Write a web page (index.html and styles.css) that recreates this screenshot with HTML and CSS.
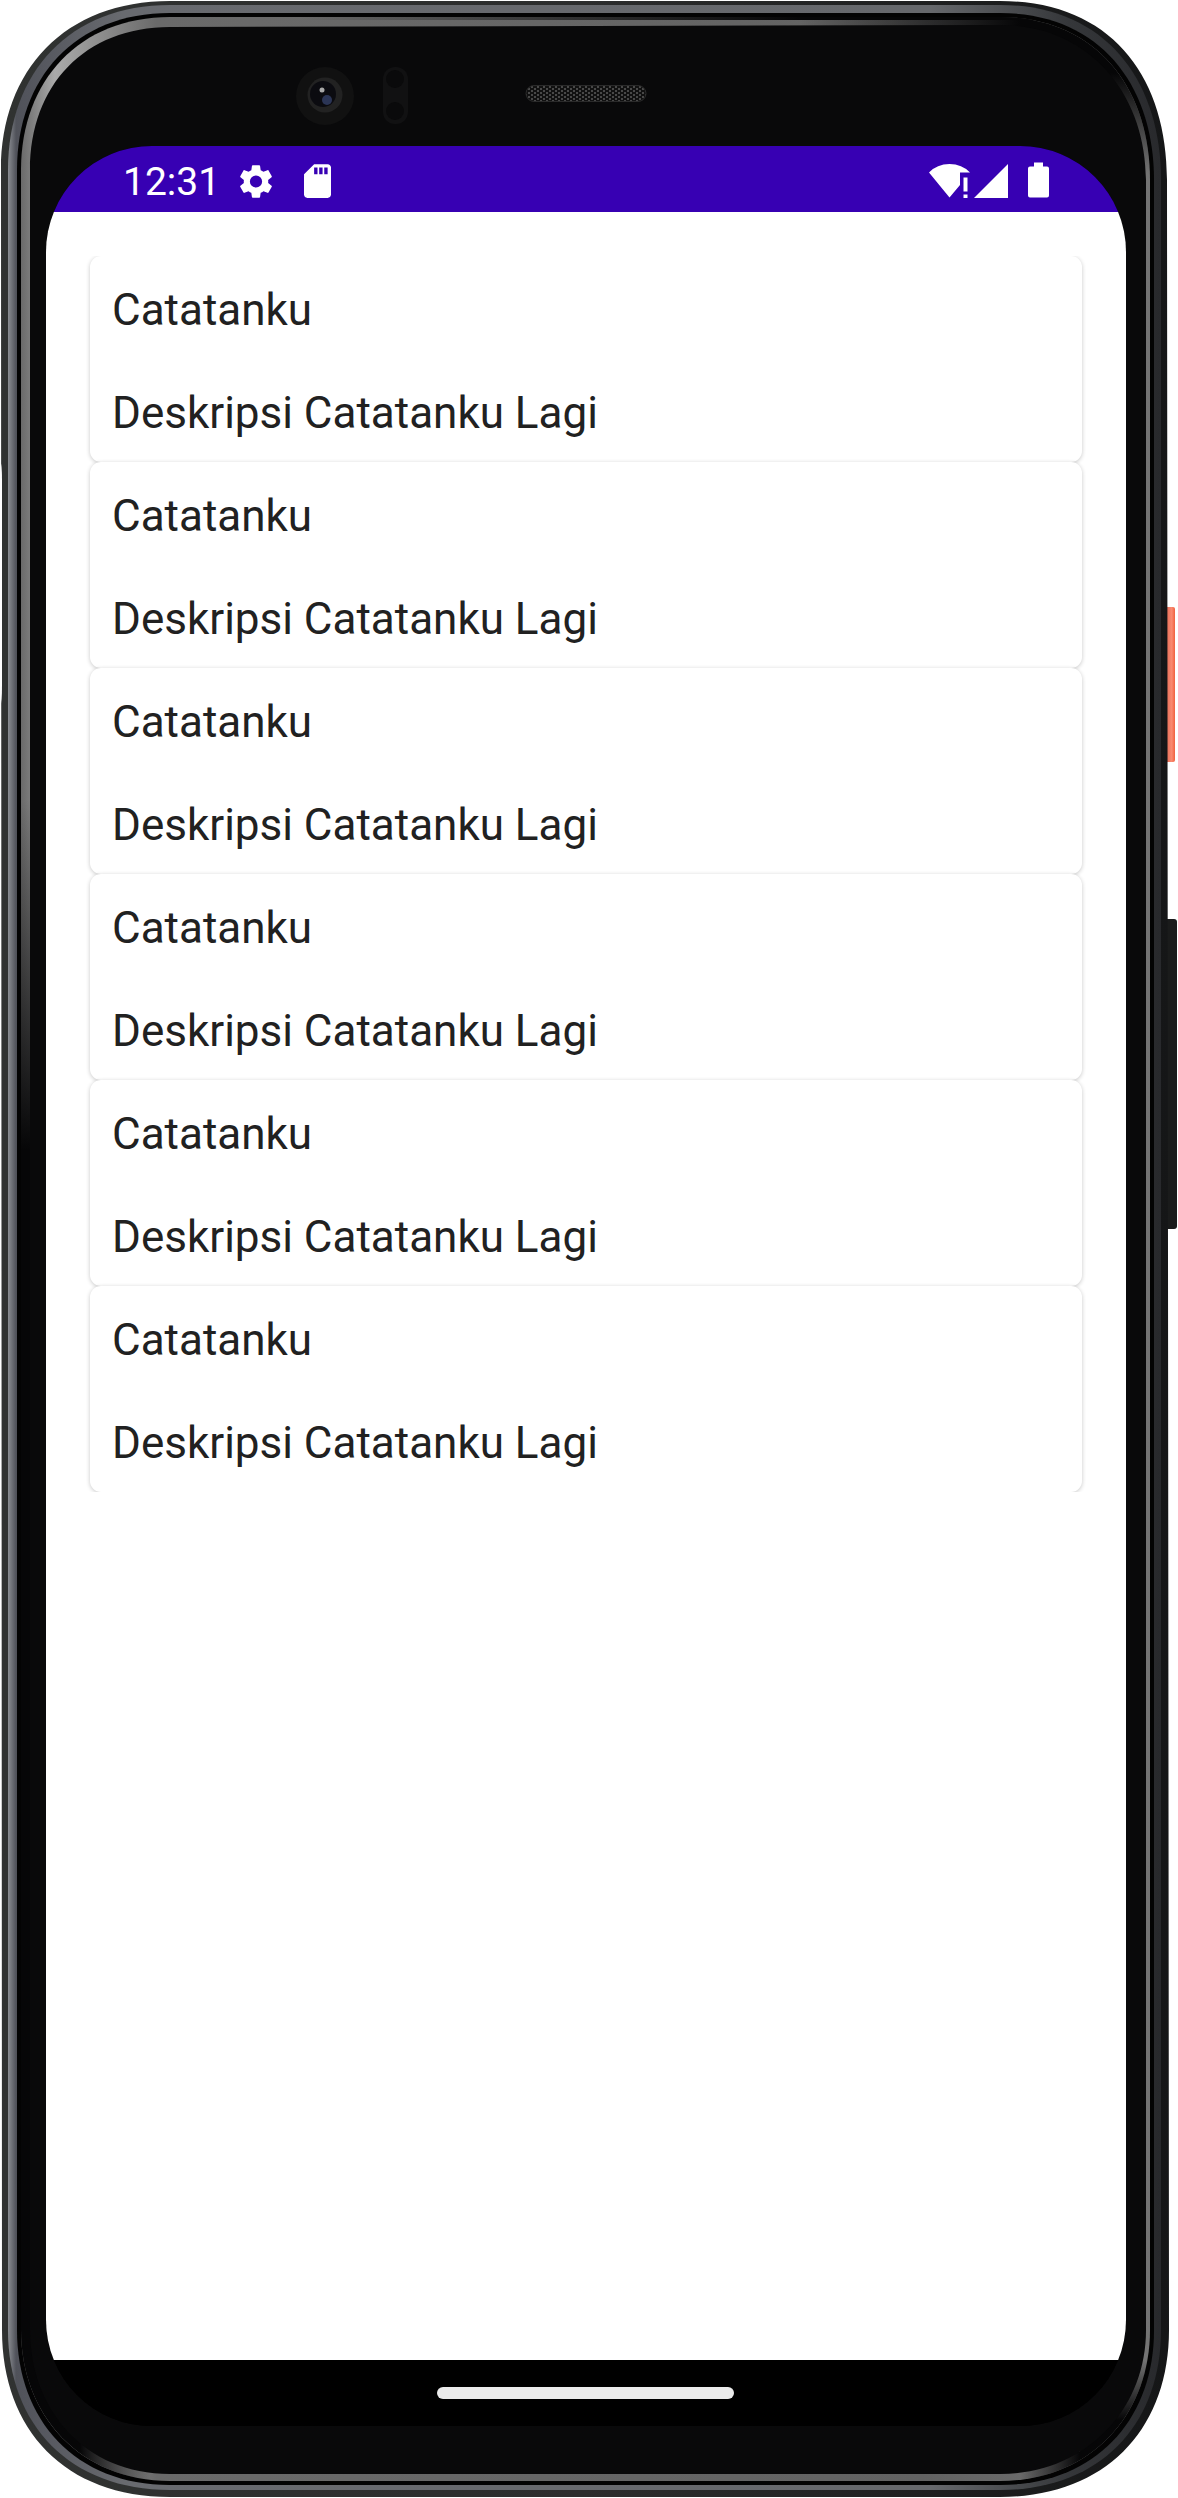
FILE: index.html
```html
<!DOCTYPE html>
<html lang="id">
<head>
<meta charset="utf-8">
<title>Catatanku</title>
<link rel="stylesheet" href="styles.css">
</head>
<body>
<div class="device">
  <svg class="shell" width="1178" height="2498" viewBox="0 0 1178 2498" aria-hidden="true">
    <defs>
      <linearGradient id="coral" x1="0" x2="1" y1="0" y2="0">
        <stop offset="0" stop-color="#7d2c20"/><stop offset=".25" stop-color="#e8705a"/><stop offset=".7" stop-color="#fa8a70"/><stop offset="1" stop-color="#f0623f"/>
      </linearGradient>
      <linearGradient id="edge" x1="0" x2="1" y1="0" y2="0">
        <stop offset="0" stop-color="#303231"/><stop offset=".5" stop-color="#2c2d2d"/><stop offset="1" stop-color="#151617"/>
      </linearGradient>
      <linearGradient id="metal" gradientUnits="userSpaceOnUse" x1="8" x2="1161" y1="0" y2="0">
        <stop offset="0" stop-color="#8a8d92"/><stop offset=".007" stop-color="#50525a"/><stop offset=".1" stop-color="#686a6f"/><stop offset=".8" stop-color="#66686c"/><stop offset=".92" stop-color="#35373a"/><stop offset="1" stop-color="#28292c"/>
      </linearGradient>
      <linearGradient id="rim" gradientUnits="userSpaceOnUse" x1="21" x2="1150" y1="0" y2="0">
        <stop offset="0" stop-color="#6a6a6a"/><stop offset=".03" stop-color="#aaa"/><stop offset=".12" stop-color="#6a6a6a"/><stop offset=".8" stop-color="#626262"/><stop offset="1" stop-color="#747474"/>
      </linearGradient>
      <linearGradient id="fade-down" x1="0" x2="0" y1="0" y2="1">
        <stop offset="0" stop-color="#060607" stop-opacity="0"/><stop offset="1" stop-color="#060607"/>
      </linearGradient>
      <linearGradient id="fade-up" x1="0" x2="0" y1="1" y2="0">
        <stop offset="0" stop-color="#060607" stop-opacity="0"/><stop offset="1" stop-color="#060607"/>
      </linearGradient>
      <linearGradient id="fade-right" x1="0" x2="1" y1="0" y2="0">
        <stop offset="0" stop-color="#060607" stop-opacity="0"/><stop offset="1" stop-color="#060607"/>
      </linearGradient>
      <linearGradient id="fade-left" x1="1" x2="0" y1="0" y2="0">
        <stop offset="0" stop-color="#060607" stop-opacity="0"/><stop offset="1" stop-color="#060607"/>
      </linearGradient>
      <pattern id="mesh" width="6" height="4" patternUnits="userSpaceOnUse">
        <rect width="6" height="4" fill="#111"/><rect width="2" height="2" fill="#484848"/><rect x="3" y="2" width="2" height="2" fill="#484848"/>
      </pattern>
      <clipPath id="rim-clip"><path d="M170 17H1000C1095 17 1150 87 1150 180V2330C1150 2415 1090 2481 1000 2481H170C80 2481 21 2415 21 2330V170C21 80 80 17 170 17Z"/></clipPath>
    </defs>
    <rect x="1164" y="607" width="11" height="155" rx="2" fill="url(#coral)"/>
    <rect x="1164" y="919" width="13" height="310" rx="3" fill="#1a1b1b"/>
    <path fill="url(#edge)" d="M170 1H1000C1110 1 1167 75 1167 180L1169 2330C1169 2430 1105 2497 1000 2497H170C65 2497 2 2430 2 2330L1 170C1 70 65 1 170 1Z"/>
    <path fill="#fff" d="M0 460Q2 464 2 480V685Q2 702 0 708Z"/>
    <path fill="url(#metal)" d="M170 5H1000C1105 5 1161 80 1161 180V2330C1161 2425 1100 2490 1000 2490H170C70 2490 8 2425 8 2330V170C8 72 70 5 170 5Z"/>
    <path fill="#030303" d="M170 13H1000C1100 13 1154 85 1154 180V2330C1154 2420 1095 2485 1000 2485H170C75 2485 17 2420 17 2330V170C17 78 75 13 170 13Z"/>
    <path fill="url(#rim)" d="M170 17H1000C1095 17 1150 87 1150 180V2330C1150 2415 1090 2481 1000 2481H170C80 2481 21 2415 21 2330V170C21 80 80 17 170 17Z"/>
    <g clip-path="url(#rim-clip)">
      <rect x="300" y="13" width="500" height="7" fill="url(#fade-right)"/>
      <rect x="800" y="13" width="350" height="7" fill="#060607"/>
      <rect x="800" y="13" width="220" height="20" fill="url(#fade-right)"/>
      <rect x="1020" y="13" width="140" height="60" fill="#060607"/>
      <rect x="1080" y="73" width="80" height="100" fill="url(#fade-up)"/>
      <rect x="17" y="800" width="16" height="350" fill="url(#fade-down)"/>
      <rect x="17" y="1150" width="63" height="1330" fill="#060607"/>
      <rect x="80" y="2400" width="70" height="82" fill="url(#fade-left)"/>
      <rect x="1020" y="2452" width="60" height="33" fill="url(#fade-right)"/>
      <rect x="1080" y="2420" width="72" height="65" fill="#060607"/>
      <rect x="1100" y="2360" width="52" height="60" fill="url(#fade-down)"/>
    </g>
    <path fill="#09090a" d="M170 27L1000 25C1090 25 1146 95 1146 180V2330C1146 2410 1085 2474 1000 2474H170C85 2474 30 2410 30 2330V170C30 85 85 27 170 27Z"/>
    <circle cx="325" cy="96" r="29" fill="#111"/>
    <circle cx="325" cy="95" r="17.500" fill="#222"/>
    <circle cx="323" cy="94" r="13" fill="#0b0b10"/>
    <circle cx="327" cy="100" r="5" fill="#2b3556"/>
    <circle cx="322" cy="90" r="2.500" fill="#a8a8a8"/>
    <rect x="383" y="67" width="25" height="57" rx="12" fill="#111112"/>
    <circle cx="395" cy="79" r="9" fill="#0a0a0b"/><circle cx="395" cy="111" r="9" fill="#0a0a0b"/>
    <rect x="526" y="85.500" width="120" height="16" rx="8" fill="url(#mesh)" stroke="#2a2a2a"/>
  </svg>
  <main class="screen">
    <header class="status">
      <span class="clock">12:31</span>
      <svg class="gear" viewBox="2 2 20 20" width="34" height="35"><path fill="#fff" d="M19.140 12.940c.04-.3.060-.61.060-.94 0-.32-.02-.64-.07-.94l2.030-1.580c.18-.14.230-.41.120-.61l-1.920-3.320c-.12-.22-.37-.29-.59-.22l-2.390.96c-.5-.38-1.030-.7-1.620-.94l-.36-2.540c-.04-.24-.24-.41-.48-.41h-3.840c-.24 0-.43.170-.47.410l-.36 2.540c-.59.240-1.130.570-1.620.940l-2.390-.96c-.22-.08-.47 0-.59.220L2.740 8.870c-.12.210-.08.470.12.610l2.030 1.580c-.05.3-.09.630-.09.940s.02.640.07.940l-2.030 1.580c-.18.140-.23.410-.12.610l1.920 3.320c.12.220.37.290.59.220l2.390-.96c.5.380 1.030.7 1.620.940l.36 2.540c.05.240.240.410.480.410h3.840c.24 0 .44-.17.470-.41l.36-2.540c.59-.24 1.130-.56 1.620-.94l2.390.96c.22.080.470 0 .59-.22l1.920-3.320c.12-.22.070-.47-.12-.61zM12 15.600A3.600 3.600 0 1 1 12 8.400a3.600 3.600 0 0 1 0 7.200z"/></svg>
      <svg class="card-icon" viewBox="4 2 16 20" width="27" height="34"><path fill="#fff" d="M18 2h-8L4.020 8 4 20c0 1.100.9 2 2 2h12c1.100 0 2-.9 2-2V4c0-1.100-.9-2-2-2zm-6 6h-2V4h2v4zm3 0h-2V4h2v4zm3 0h-2V4h2v4z"/></svg>
      <svg class="system" viewBox="0 0 120 36" width="120" height="36" fill="#fff"><path d="M0 10.500Q8 2 20.500 2T41 10.500H31V23L20.500 35.500ZM34.500 15.500h4v14h-4zM34.500 32.500h4v3.500h-4zM45 36 79 2V36ZM105 .5h9v4h4q2 0 2 2v27q0 2-2 2H101q-2 0-2-2V6.500q0-2 2-2h4Z"/></svg>
    </header>
    <div class="content">
      <section class="notes">
        <article class="note"><p>Catatanku</p><p>Deskripsi Catatanku Lagi</p></article>
        <article class="note"><p>Catatanku</p><p>Deskripsi Catatanku Lagi</p></article>
        <article class="note"><p>Catatanku</p><p>Deskripsi Catatanku Lagi</p></article>
        <article class="note"><p>Catatanku</p><p>Deskripsi Catatanku Lagi</p></article>
        <article class="note"><p>Catatanku</p><p>Deskripsi Catatanku Lagi</p></article>
        <article class="note"><p>Catatanku</p><p>Deskripsi Catatanku Lagi</p></article>
      </section>
    </div>
    <nav class="navbar"><span class="handle"></span></nav>
  </main>
</div>
</body>
</html>
```
FILE: styles.css
```css
* { box-sizing: border-box; }
body { margin: 0; background: #fff; font-family: Roboto, sans-serif; }
.device { position: relative; width: 1178px; height: 2498px; padding: 146px 52px 72px 46px; overflow: hidden; }
.shell { position: absolute; inset: 0; }
.screen { position: relative; display: flex; flex-direction: column; width: 1080px; height: 2280px; border-radius: 106px; overflow: hidden; background: #000; }
.status { display: flex; align-items: center; height: 66px; padding: 4px 77px 0; background: #3700b3; color: #fff; }
.clock { width: 93px; padding-top: 2px; font-size: 39px; line-height: 66px; white-space: nowrap; }
.gear { margin-left: 23px; }
.card-icon { margin-left: 31px; }
.system { margin-left: auto; margin-top: -3px; }
.content { flex: 1; padding: 44px 40px; background: #fff; }
.notes { height: 1236px; padding: 0 4px; overflow: hidden; }
.note { height: 206px; border-radius: 11px; background: #fff; box-shadow: 0 1px 4px rgba(0, 0, 0, .22); color: #212121; font-size: 44px; }
.note p { margin: 0; height: 103px; padding: 0 22px; line-height: 108px; }
.navbar { display: flex; align-items: center; justify-content: center; height: 66px; padding-right: 1px; background: #000; }
.handle { width: 297px; height: 12px; border-radius: 6px; background: #ebebeb; }
```
